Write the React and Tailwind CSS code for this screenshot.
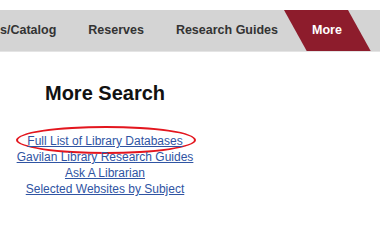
const links = [
  "Full List of Library Databases",
  "Gavilan Library Research Guides",
  "Ask A Librarian",
  "Selected Websites by Subject",
];

export default function App() {
  return (
    <div
      className="w-[380px] h-[206px] overflow-hidden bg-white text-[#333]"
      style={{ fontFamily: '"Liberation Sans", Arial, sans-serif' }}
    >
      {/* nav bar */}
      <nav className="mt-[10px] h-[42px] bg-[#d4d4d4] border-b border-[#e4e4e4] flex items-center gap-8 overflow-hidden text-[12.5px] font-bold">
        <span>s/Catalog</span>
        <span>Reserves</span>
        <span className="mr-[2px]">Research Guides</span>
        <span className="relative text-white">
          <span className="absolute -inset-x-[17px] -top-[15px] -bottom-[14px] bg-[#8d1c2c] skew-x-[29deg]" />
          <span className="relative">More</span>
        </span>
      </nav>

      {/* more search */}
      <section className="w-[210px] text-center">
        <h2 className="mt-[27px] text-[20px] leading-[28px] font-bold text-[#111]">
          More Search
        </h2>
        <ul className="mt-[26px] text-[12px] leading-4">
          {links.map((label, i) => (
            <li key={i} className="relative">
              {i === 0 && (
                <span className="absolute left-[16px] w-[180px] -top-[7px] h-[28px] rounded-[50%] border-2 border-[#e3161e]" />
              )}
              <a href="#" className="relative text-[#2f54a3] underline">
                {label}
              </a>
            </li>
          ))}
        </ul>
      </section>
    </div>
  );
}
